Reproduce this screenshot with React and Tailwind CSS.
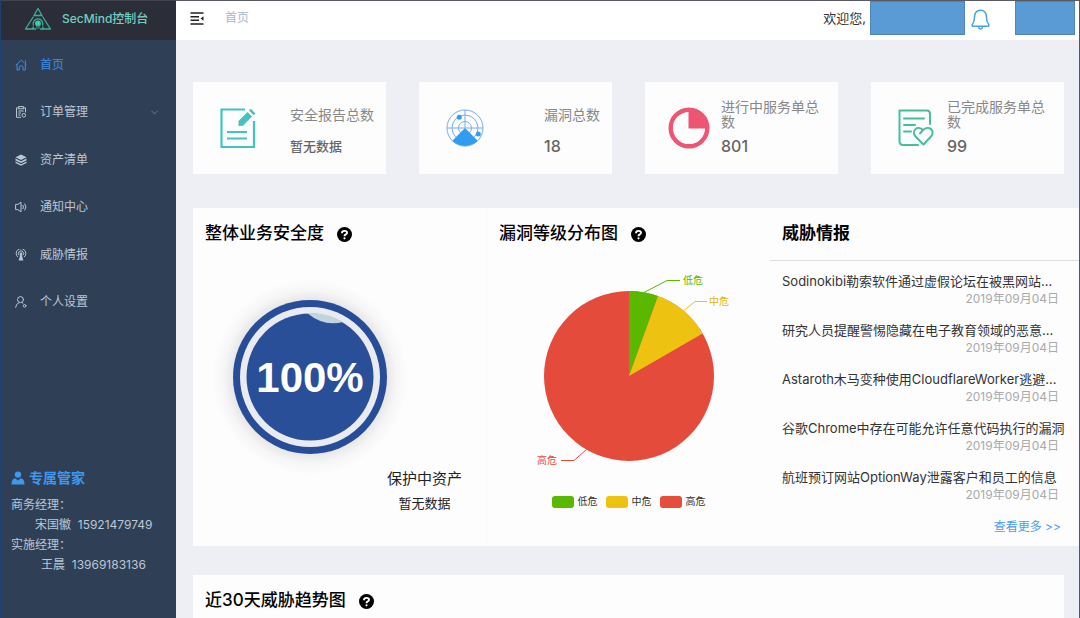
import { ChevronDown } from "lucide-react"

const menuItems = [
  { name: "首页", icon: HomeIcon, active: true },
  { name: "订单管理", icon: OrderIcon, hasChildren: true },
  { name: "资产清单", icon: LayersIcon },
  { name: "通知中心", icon: SpeakerIcon },
  { name: "威胁情报", icon: AntennaIcon },
  { name: "个人设置", icon: UserIcon },
]

const stats = [
  { label: "安全报告总数", value: "暂无数据", icon: ReportIcon, empty: true },
  { label: "漏洞总数", value: 18, icon: RadarIcon },
  { label: "进行中服务单总数", value: 801, icon: ProgressIcon },
  { label: "已完成服务单总数", value: 99, icon: DoneIcon },
]

const news = [
  { title: "Sodinokibi勒索软件通过虚假论坛在被黑网站...", date: "2019年09月04日" },
  { title: "研究人员提醒警惕隐藏在电子教育领域的恶意...", date: "2019年09月04日" },
  { title: "Astaroth木马变种使用CloudflareWorker逃避...", date: "2019年09月04日" },
  { title: "谷歌Chrome中存在可能允许任意代码执行的漏洞", date: "2019年09月04日" },
  { title: "航班预订网站OptionWay泄露客户和员工的信息", date: "2019年09月04日" },
]

function Logo() {
  return (
    <svg className="w-7 h-6 shrink-0" viewBox="0 0 28 24" fill="none" stroke="#3fae9f" strokeWidth="1.3" strokeLinejoin="round">
      <path d="M14 1.5 L18 8.5 H10 Z" />
      <path d="M9.500 9.500 L1.500 22 H8.500 L9.500 19.500 M18.500 9.500 L26.500 22 H19.500 L18.500 19.500" />
      <path d="M8.500 22 H12 M16 22 H19.500" />
      <path d="M9.400 18.500 A4.900 4.900 0 1 1 18.600 18.500" />
      <circle cx="14" cy="16.500" r="2.900" fill="#35cfa8" stroke="none" />
      <path d="M13 18 V22 M15 18 V22" stroke="#2fa08c" strokeWidth="1" />
    </svg>
  )
}

function HomeIcon() {
  return (
    <svg className="w-3 h-3" viewBox="0 0 12 12" fill="none" stroke="currentColor" strokeLinejoin="round" strokeLinecap="round">
      <path d="M1 6 L6.3 1.2 L8.7 3.3 M10.3 1.8 V5 L11 5.8" />
      <path d="M2 5.5 V11 H4.3 V7.5 Q6.2 5.5 8 7.5 V11 H10.3 V5" />
    </svg>
  )
}

function OrderIcon() {
  return (
    <svg className="w-3 h-3" viewBox="0 0 12 12" fill="none" stroke="currentColor">
      <path d="M3.5 1.8 H1.5 V11.3 H6 M8.5 1.8 H10.5 V6.5" />
      <rect x="3.7" y="0.6" width="4.6" height="2.2" />
      <path d="M3.3 5 H8.7 M3.3 7 H6 M3.3 9 H5.3" />
      <circle cx="8.8" cy="9.3" r="1.8" />
    </svg>
  )
}

function LayersIcon() {
  return (
    <svg className="w-3 h-3" viewBox="0 0 12 12" fill="currentColor">
      <path d="M6 0.5 L11.5 3.2 L6 5.9 L0.5 3.2 Z" />
      <path d="M0.5 4.6 L6 7.3 L11.5 4.6 V6.4 L6 9.1 L0.5 6.4 Z" />
      <path d="M0.5 7.600 L6 10.300 L11.500 7.600 V9.100 L6 11.800 L0.500 9.100 Z" />
    </svg>
  )
}

function SpeakerIcon() {
  return (
    <svg className="w-3 h-3" viewBox="0 0 12 12" fill="none" stroke="currentColor" strokeLinejoin="round">
      <path d="M0.6 3.4 H2.8 L6 1.2 V10.8 L2.8 8.6 H0.6 Z" />
      <path d="M7.8 4 Q9 6 7.8 8 M9.6 2.6 Q12.2 6 9.6 9.4" />
    </svg>
  )
}

function AntennaIcon() {
  return (
    <svg className="w-3 h-3" viewBox="0 0 12 12" fill="none" stroke="currentColor">
      <path d="M2.8 8 A4.8 4.8 0 1 1 9.2 8" />
      <path d="M4.1 6.3 A2.6 2.6 0 1 1 7.9 6.3" />
      <circle cx="6" cy="4.7" r="1.3" fill="currentColor" stroke="none" />
      <path d="M5.3 5.5 H6.7 L8.3 11.6 H3.7 Z" fill="currentColor" stroke="none" />
    </svg>
  )
}

function UserIcon() {
  return (
    <svg className="w-3 h-3" viewBox="0 0 12 12" fill="none" stroke="currentColor" strokeLinecap="round">
      <circle cx="5.5" cy="3.6" r="3" />
      <path d="M0.6 11.3 Q1 7.8 4 6.6 M7 6.6 L8 7.4" />
      <circle cx="9.6" cy="9.8" r="1.3" />
    </svg>
  )
}

function ManagerIcon() {
  return (
    <svg className="w-[14px] h-[14px]" viewBox="0 0 14 14" fill="currentColor">
      <circle cx="7" cy="3.6" r="3.2" />
      <path d="M0.5 13.5 Q0.5 7.8 4.3 7.2 L7 9.6 L9.7 7.2 Q13.5 7.8 13.5 13.5 Z" />
    </svg>
  )
}

function CollapseIcon() {
  return (
    <svg className="w-[14px] h-[13px]" viewBox="0 0 14 13" fill="none" stroke="#222" strokeWidth="1.4">
      <path d="M0.5 1 H13.5 M0.5 4.7 H9 M0.5 8.3 H9 M0.5 12 H13.5" />
      <path d="M13.5 4.2 V8.8 L10.5 6.5 Z" fill="#222" stroke="none" />
    </svg>
  )
}

function BellIcon() {
  return (
    <svg className="w-[19px] h-[21px]" viewBox="0 0 19 21" fill="none" stroke="#45a1ea" strokeWidth="1.5" strokeLinejoin="round" strokeLinecap="round">
      <path d="M9.5 1.2 C5.8 1.2 3.6 4 3.6 7.6 C3.6 12 3 13.4 1.4 15.4 C0.8 16.5 1.1 17.300 2 17.300 H17 C17.900 17.300 18.200 16.500 17.600 15.400 C16 13.400 15.400 12 15.400 7.600 C15.400 4 13.200 1.200 9.500 1.200 Z" />
      <path d="M7.500 18 Q7.800 20 9.500 20 Q11.200 20 11.500 18" />
    </svg>
  )
}

function HelpIcon() {
  return (
    <svg className="w-[15px] h-[15px]" viewBox="0 0 15 15">
      <circle cx="7.5" cy="7.5" r="7.5" fill="#000" />
      <path d="M5 6.2 Q5 3.9 7.5 3.9 Q10 3.9 10 5.8 Q10 6.900 8.700 7.500 Q7.500 8 7.500 9.200" fill="none" stroke="#fff" strokeWidth="1.9" />
      <circle cx="7.5" cy="11.3" r="1.100" fill="#fff" />
    </svg>
  )
}

function ReportIcon() {
  return (
    <svg className="w-9 h-[42px]" viewBox="0 0 36 42" fill="none" stroke="#41c5bb" strokeWidth="2.2">
      <path d="M25 2.500 H1.500 V40 H34 V14" />
      <path d="M7 25 H27 M7 31.500 H27" />
      <path d="M18.500 19 V14 L27.500 5 L32 9.500 L23 18.700 Z" fill="#41c5bb" stroke="none" />
      <path d="M29 3.600 L30.800 1.800 L35.500 6.500 L33.600 8.300 Z" fill="#41c5bb" stroke="none" />
    </svg>
  )
}

function RadarIcon() {
  return (
    <svg className="w-[38px] h-[38px]" viewBox="0 0 38 38" fill="none" stroke="#74b0ea">
      <circle cx="19" cy="19" r="18" />
      <circle cx="19" cy="19" r="13" />
      <circle cx="19" cy="19" r="6.5" />
      <path d="M19 1 V19 M1 19 H37" />
      <path d="M19 19 L31.7 31.7 A18 18 0 0 1 6.3 31.7 Z" fill="#319cf2" stroke="none" />
      <circle cx="13.3" cy="8.3" r="2.5" fill="#319cf2" stroke="none" />
      <circle cx="32.3" cy="25" r="2.5" fill="#319cf2" stroke="none" />
    </svg>
  )
}

function ProgressIcon() {
  return (
    <svg className="w-[42px] h-[42px] -ml-1" viewBox="0 0 42 42">
      <circle cx="21" cy="21" r="18.3" fill="none" stroke="#ee5572" strokeWidth="4.4" />
      <path d="M20.5 3 V21.5 H39 A18.3 18.3 0 0 0 20.5 3 Z" fill="#ee5572" />
    </svg>
  )
}

function DoneIcon() {
  return (
    <svg className="w-9 h-[38px]" viewBox="0 0 36 38" fill="none" stroke="#45be9b" strokeWidth="2" strokeLinecap="round" strokeLinejoin="round">
      <path d="M32 15 V5 Q32 1.500 29 1.500 H1.500 V32 Q1.500 36 5 36 H20" />
      <path d="M6 9.500 H26 M6 16 H17 M6 22.500 H13" />
      <path d="M25.500 35.500 L17.500 27.500 C13 22 19.500 15.500 25 21 C30.500 15.500 38 22 33 27.500 Z" />
      <path d="M22 24.500 L25 21" />
    </svg>
  )
}

const Sidebar = () => (
  <aside className="flex flex-col w-[176px] shrink-0 bg-[#2f4056] border-l border-[#1d4272] text-[#bcc7d6]">
    <div className="flex items-center h-10 pl-[23px] pb-1 gap-[10px] bg-[#2b2d38] border-t border-[#44444f]">
      <Logo />
      <span className="text-xs font-medium text-[#72cdc0] whitespace-nowrap">SecMind控制台</span>
    </div>

    <nav className="grid auto-rows-fr h-[285px] mt-px">
      {menuItems.map(({ name, icon: Icon, active, hasChildren }) => (
        <a
          key={name}
          href="#"
          className={`flex items-center pl-[14px] pr-4 gap-[13px] text-xs ${active ? "text-[#3f8de0]" : ""}`}
        >
          <Icon />
          <span>{name}</span>
          {hasChildren && <ChevronDown size={11} strokeWidth={1.5} className="ml-auto text-[#8492a6]" />}
        </a>
      ))}
    </nav>

    <div className="mt-auto mb-[43px] pl-[10px] text-xs leading-5">
      <h3 className="flex items-center gap-1 mb-[5px] h-6 text-sm font-bold text-[#3f97ee]">
        <ManagerIcon />
        专属管家
      </h3>
      <p>商务经理：</p>
      <p className="pl-6 whitespace-pre">宋国徽  15921479749</p>
      <p>实施经理：</p>
      <p className="pl-[30px] whitespace-pre">王晨  13969183136</p>
    </div>
  </aside>
)

const Header = () => (
  <header className="flex items-start h-10 pl-[14px] pr-1 bg-white border-t border-[#5a5a62]">
    <div className="flex items-center h-[34px] gap-[21px]">
      <button aria-label="收起菜单">
        <CollapseIcon />
      </button>
      <a href="#" className="text-xs text-[#a9b5cf]">首页</a>
    </div>
    <div className="flex ml-auto">
      <span className="flex items-center h-9 mr-1 text-[13px] text-[#333]">欢迎您,</span>
      <div className="w-[95px] h-[34px] bg-[#5b9bd5] border border-[#4f86b9]"></div>
      <button className="flex items-center h-9 ml-[6px]" aria-label="通知">
        <BellIcon />
      </button>
      <div className="w-[60px] h-[34px] ml-[25px] bg-[#5b9bd5] border border-[#4f86b9]"></div>
    </div>
  </header>
)

const PanelTitle = ({ children, help }) => (
  <h2 className="flex items-center gap-[13px] h-[52px] px-3 text-[17px] font-medium text-black">
    {children}
    {help && <HelpIcon />}
  </h2>
)

const Gauge = () => (
  <svg className="w-[200px] h-[200px]" viewBox="0 0 200 200">
    <defs>
      <radialGradient id="glow">
        <stop offset="0.78" stopColor="#000" stopOpacity="0.09" />
        <stop offset="0.88" stopColor="#000" stopOpacity="0.03" />
        <stop offset="1" stopColor="#000" stopOpacity="0" />
      </radialGradient>
    </defs>
    <circle cx="100" cy="100" r="98" fill="url(#glow)" />
    <circle cx="100" cy="100" r="77" fill="#284d98" />
    <circle cx="100" cy="100" r="70" fill="#e9ebf1" />
    <circle cx="100" cy="100" r="63.5" fill="#294f98" />
    <path d="M97 36 A64 64 0 0 1 133 45 Q114 50 97 36 Z" fill="#c3d5dc" />
    <text x="100" y="115" textAnchor="middle" className="text-[42px] font-bold font-['Liberation_Sans',sans-serif]" fill="#fff">100%</text>
  </svg>
)

const legend = [
  { name: "低危", color: "bg-[#5bb800]" },
  { name: "中危", color: "bg-[#eec211]" },
  { name: "高危", color: "bg-[#e54d3c]" },
]

const PieChart = () => (
  <svg className="w-[240px] h-[220px]" viewBox="0 0 240 220">
    <circle cx="120" cy="110" r="85" fill="#e54b3a" />
    <path d="M120 110 V25 A85 85 0 0 1 149 30.1 Z" fill="#5bb800" />
    <path d="M120 110 L149 30.1 A85 85 0 0 1 193.6 67.5 Z" fill="#eec211" />
    <g fill="none">
      <path d="M135 26.5 L158 14.5 H171" stroke="#5bb800" />
      <path d="M175 44.5 L186 35.5 H198" stroke="#eec211" />
      <path d="M77.5 183.5 L65 194.5 H52" stroke="#e54b3a" />
    </g>
    <g className="text-[10px]">
      <text x="174" y="18" fill="#5bb800">低危</text>
      <text x="200" y="39" fill="#e0b410">中危</text>
      <text x="28" y="198" fill="#e54b3a">高危</text>
    </g>
  </svg>
)

export default function App() {
  return (
    <div className="flex h-screen overflow-hidden border-r border-[#4d5478] bg-[#edeff4] font-[Inter,'Noto_Sans_CJK_SC',sans-serif]">
      <Sidebar />

      <div className="flex-1 min-w-0">
        <Header />

        <main className="pl-[17px] pt-[42px]">
          <div className="grid grid-cols-4 gap-[33px] mr-[15px]">
            {stats.map(({ label, value, icon: Icon, empty }) => (
              <div key={label} className="flex items-center justify-between h-[92px] pl-[27px] pr-3 bg-[#fdfdfe]">
                <Icon />
                <div className="max-w-[105px]">
                  <p className="flex items-center h-7 text-sm leading-[15px] text-[#888]">{label}</p>
                  <p className={`mt-2 leading-5 font-medium text-[#666] ${empty ? "text-[13px]" : "text-base"}`}>{value}</p>
                </div>
              </div>
            ))}
          </div>

          <div className="flex mt-[34px] h-[338px] bg-[#fdfdfe]">
            <section className="w-[294px] border-r border-[#f8f8fa]">
              <PanelTitle help>整体业务安全度</PanelTitle>
              <div className="mt-[17px] ml-[17px]">
                <Gauge />
              </div>
              <div className="flex flex-col items-center ml-auto mr-6 w-fit text-[#222]">
                <p className="text-[15px] leading-5 -mt-2">保护中资产</p>
                <p className="mt-[6px] text-[13px] leading-4">暂无数据</p>
              </div>
            </section>

            <section className="flex-1">
              <PanelTitle help>漏洞等级分布图</PanelTitle>
              <div className="flex flex-col items-center mt-[6px]">
                <PieChart />
                <ul className="flex gap-2 mt-2 text-[10px] text-[#333]">
                  {legend.map((item) => (
                    <li key={item.name} className="flex items-center gap-1">
                      <span className={`w-[22px] h-3 rounded-[3px] ${item.color}`}></span>
                      {item.name}
                    </li>
                  ))}
                </ul>
              </div>
            </section>

            <section className="w-[309px]">
              <div className="border-b border-[#dcdde0]">
                <PanelTitle>
                  <span className="font-bold">威胁情报</span>
                </PanelTitle>
              </div>
              <ul className="pt-[10px] px-3">
                {news.map((item) => (
                  <li key={item.title} className="h-[49px] whitespace-nowrap">
                    <a href="#" className="block text-[13px] leading-5 text-[#333]">{item.title}</a>
                    <p className="pr-2 text-xs leading-4 text-right text-[#aaa]">{item.date}</p>
                  </li>
                ))}
              </ul>
              <div className="mt-px pr-[18px] text-right text-xs leading-5">
                <a href="#" className="text-[#4a9df0]">查看更多 &gt;&gt;</a>
              </div>
            </section>
          </div>

          <section className="mt-[29px] mr-[15px] h-20 bg-[#fdfdfe]">
            <PanelTitle help>近30天威胁趋势图</PanelTitle>
          </section>
        </main>
      </div>
    </div>
  )
}
